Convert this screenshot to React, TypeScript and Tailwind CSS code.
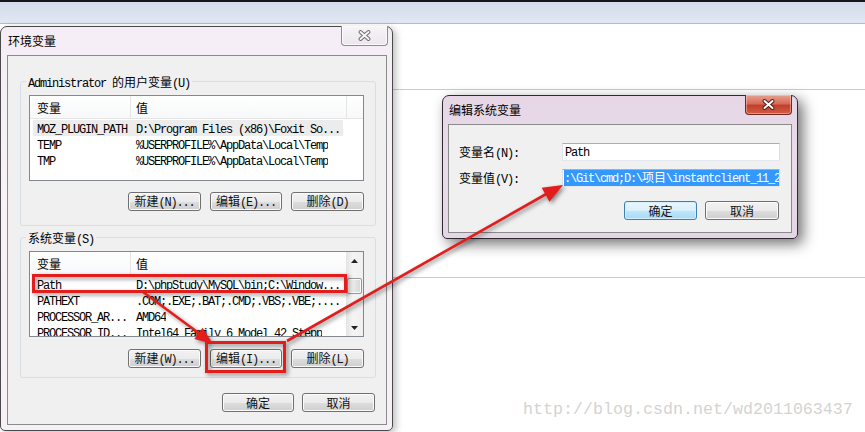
import React from "react";

const CJK_RE = /[\u2e80-\u9fff\uf900-\ufaff\uff00-\uffef\u3000-\u303f]/;

function T({ s }: { s: string }) {
  const parts: { t: string; c: boolean }[] = [];
  for (const ch of s) {
    const c = CJK_RE.test(ch);
    const last = parts[parts.length - 1];
    if (last && last.c === c) last.t += ch;
    else parts.push({ t: ch, c });
  }
  return (
    <span className="whitespace-pre">
      {parts.map((p, i) =>
        p.c ? (
          <span key={i} className="font-['Noto_Sans_CJK_SC',sans-serif] text-[12px]">
            {p.t}
          </span>
        ) : (
          <span key={i} className="font-['Liberation_Mono',monospace] text-[12px] tracking-[-1.2px]">
            {p.t}
          </span>
        )
      )}
    </span>
  );
}

function Btn({ s, w, def = false }: { s: string; w: string; def?: boolean }) {
  return (
    <div
      className={`${w} flex h-[19px] items-center justify-center rounded-[3px] border leading-[15px] text-[#111] ${
        def
          ? "border-[#3c7fb1] bg-[linear-gradient(to_bottom,#eaf6fd_0%,#d9f0fc_50%,#bee6fd_51%,#a7d9f5_100%)] shadow-[inset_0_0_0_1px_#d3eefc]"
          : "border-[#707070] bg-[linear-gradient(to_bottom,#f2f2f2_0%,#ebebeb_50%,#dddddd_51%,#cfcfcf_100%)] shadow-[inset_0_0_0_1px_#fbfbfb]"
      }`}
    >
      <T s={s} />
    </div>
  );
}

function CloseX({ outline, fill }: { outline: string; fill: string }) {
  return (
    <svg width="13" height="11" viewBox="0 0 13 11">
      <path d="M2.5 2 L10.5 9 M10.5 2 L2.5 9" stroke={outline} strokeWidth="3.8" strokeLinecap="round" />
      <path d="M2.5 2 L10.5 9 M10.5 2 L2.5 9" stroke={fill} strokeWidth="2" strokeLinecap="round" />
    </svg>
  );
}

function Scrollbar() {
  return (
    <div className="flex w-[17px] shrink-0 flex-col bg-[linear-gradient(to_right,#e3e3e3,#f4f4f4_40%,#f0f0f0)]">
      <div className="flex h-[17px] items-center justify-center">
        <svg width="7" height="4" viewBox="0 0 7 4">
          <path d="M0 4 L3.5 0 L7 4Z" fill="#222" />
        </svg>
      </div>
      <div className="flex-1">
        <div className="mx-[1px] mt-[9px] h-[16px] rounded-[2px] border border-[#979797] bg-[linear-gradient(to_right,#f4f4f4,#e6e6e6_50%,#d6d6d6)] shadow-[inset_0_0_0_1px_#fafafa]" />
      </div>
      <div className="flex h-[17px] items-center justify-center">
        <svg width="7" height="4" viewBox="0 0 7 4">
          <path d="M0 0 L3.5 4 L7 0Z" fill="#222" />
        </svg>
      </div>
    </div>
  );
}

function ListView({
  rows,
  scroll,
  selected,
}: {
  rows: [string, string][];
  scroll: boolean;
  selected: number;
}) {
  return (
    <div className="flex h-[86px] w-full overflow-hidden border border-[#828790] bg-white text-black">
      <div className="flex min-w-0 flex-1 flex-col">
        <div className="flex h-[23px] shrink-0 border-b border-[#e5e5e5] bg-[linear-gradient(to_bottom,#ffffff,#f7f8fa)] leading-[16px]">
          <div className="flex w-[101px] items-center border-r border-[#e5e5e5] pl-[7px]">
            <T s="变量" />
          </div>
          <div className="flex flex-1 items-center pl-[5px]">
            <T s="值" />
          </div>
        </div>
        <div className="px-[3px] pt-[1px]">
          {rows.map((r, i) => (
            <div
              key={i}
              className={`flex h-[16px] items-center overflow-hidden whitespace-nowrap leading-[16px] ${
                i === selected ? "bg-[#ececec]" : ""
              }`}
            >
              <div className="w-[97px] shrink-0 overflow-hidden pl-[4px]">
                <T s={r[0]} />
              </div>
              <div className="overflow-hidden pl-[6px]">
                <T s={r[1]} />
              </div>
            </div>
          ))}
        </div>
      </div>
      {scroll ? (
        <Scrollbar />
      ) : (
        <div className="h-[23px] w-[17px] shrink-0 border-b border-l border-[#e5e5e5] bg-[linear-gradient(to_bottom,#ffffff,#f7f8fa)]" />
      )}
    </div>
  );
}

const userRows: [string, string][] = [
  ["MOZ_PLUGIN_PATH", "D:\\Program Files (x86)\\Foxit So..."],
  ["TEMP", "%USERPROFILE%\\AppData\\Local\\Temp"],
  ["TMP", "%USERPROFILE%\\AppData\\Local\\Temp"],
];

const sysRows: [string, string][] = [
  ["Path", "D:\\phpStudy\\MySQL\\bin;C:\\Window..."],
  ["PATHEXT", ".COM;.EXE;.BAT;.CMD;.VBS;.VBE;...."],
  ["PROCESSOR_AR...", "AMD64"],
  ["PROCESSOR_ID...", "Intel64 Family 6 Model 42 Stepp"],
];

function EnvDialog() {
  return (
    <div className="absolute left-0 top-[26px] flex h-[405px] w-[393px] flex-col rounded-t-[7px] rounded-b-[5px] border border-[#4a4a4a] bg-[linear-gradient(to_bottom,#f4edf5,#f8f2f8_40%,#f7f1f7)] shadow-[3px_2px_7px_rgba(0,0,0,0.25)]">
      <div className="flex h-[28px] shrink-0 items-start">
        <div className="flex h-[28px] flex-1 items-center pl-[7px] leading-[16px] text-black">
          <span className="font-['Noto_Sans_CJK_SC',sans-serif] text-[12px]">环境变量</span>
        </div>
        <div className="mr-[4px] -mt-[1px] flex h-[20px] w-[47px] items-center justify-center rounded-b-[4px] border border-t-0 border-[#8d8d8d] bg-[linear-gradient(to_bottom,#f7f5f8,#ebe6ec)] shadow-[inset_0_0_0_1px_#fbfbfb]">
          <CloseX outline="#6a6a6a" fill="#f5f5f5" />
        </div>
      </div>
      <div className="mx-[5px] ml-[6px] flex h-[370px] flex-col border border-[#8b8b8b] bg-[#f0f0f0] text-black">
        <fieldset className="ml-[12px] mr-[10px] mt-[17px] rounded-[3px] border border-[#d5dfe5] pb-[14px] pl-[8px] pr-[11px] pt-[6px]">
          <legend className="ml-[-3px] h-[16px] whitespace-nowrap px-[2px] leading-[16px]">
            <T s="Administrator 的用户变量(U)" />
          </legend>
          <ListView rows={userRows} scroll={false} selected={0} />
          <div className="mt-[11px] flex justify-end gap-[9px]">
            <Btn s="新建(N)..." w="w-[73px]" />
            <Btn s="编辑(E)..." w="w-[72px]" />
            <Btn s="删除(D)" w="w-[73px]" />
          </div>
        </fieldset>
        <fieldset className="ml-[12px] mr-[10px] mt-[3px] rounded-[3px] border border-[#d5dfe5] pb-[9px] pl-[8px] pr-[11px] pt-[6px]">
          <legend className="ml-[-3px] h-[16px] whitespace-nowrap px-[2px] leading-[16px]">
            <T s="系统变量(S)" />
          </legend>
          <ListView rows={sysRows} scroll={true} selected={-1} />
          <div className="mt-[12px] flex justify-end gap-[9px]">
            <Btn s="新建(W)..." w="w-[73px]" />
            <Btn s="编辑(I)..." w="w-[72px]" />
            <Btn s="删除(L)" w="w-[73px]" />
          </div>
        </fieldset>
        <div className="mr-[11px] mt-[15px] flex justify-end gap-[8px]">
          <Btn s="确定" w="w-[72px]" />
          <Btn s="取消" w="w-[73px]" />
        </div>
      </div>
    </div>
  );
}

function EditDialog() {
  return (
    <div className="absolute left-[442px] top-[95px] flex h-[144px] w-[356px] flex-col rounded-t-[7px] rounded-b-[5px] border border-[#2e2a2e] bg-[linear-gradient(to_bottom,#e6d6e6,#e9dce9_50%,#e4d6e4)] shadow-[5px_5px_14px_rgba(0,0,0,0.55)]">
      <div className="flex h-[28px] shrink-0 items-start">
        <div className="flex h-[28px] flex-1 items-center pl-[6px] leading-[16px] text-black">
          <span className="font-['Noto_Sans_CJK_SC',sans-serif] text-[12px]">编辑系统变量</span>
        </div>
        <div className="mr-[5px] -mt-[1px] flex h-[20px] w-[47px] items-center justify-center rounded-b-[4px] border border-t-0 border-[#6d2a22] bg-[linear-gradient(to_bottom,#e7a292,#d66c59_45%,#c1402c_55%,#d25c44)] shadow-[inset_0_0_0_1px_rgba(255,220,210,0.45)]">
          <CloseX outline="#4b1a14" fill="#ffffff" />
        </div>
      </div>
      <div className="ml-[5px] mr-[5px] flex h-[109px] flex-col border border-[#8b8b8b] bg-[#f0f0f0] pl-[10px] text-black">
        <div className="mt-[18px] flex h-[18px] items-center">
          <div className="w-[103px] leading-[16px]">
            <T s="变量名(N):" />
          </div>
          <div className="flex h-[18px] w-[218px] items-center border border-[#abadb3] border-b-[#e3e9ef] border-l-[#e2e3ea] border-r-[#dbdfe6] bg-white pl-[2px] leading-[15px]">
            <T s="Path" />
          </div>
        </div>
        <div className="mt-[8px] flex h-[18px] items-center">
          <div className="w-[103px] leading-[16px]">
            <T s="变量值(V):" />
          </div>
          <div className="flex h-[18px] w-[218px] items-center overflow-hidden whitespace-nowrap border border-[#abadb3] border-b-[#e3e9ef] border-l-[#e2e3ea] border-r-[#dbdfe6] bg-white pl-[1px]">
            <span className="bg-[#3399ff] leading-[15px] text-white">
              <T s={":\\Git\\cmd;D:\\项目\\instantclient_11_2"} />
            </span>
          </div>
        </div>
        <div className="mr-[12px] mt-[14px] flex justify-end gap-[8px]">
          <Btn s="确定" w="w-[73px]" def />
          <Btn s="取消" w="w-[74px]" />
        </div>
      </div>
    </div>
  );
}

function Annotations() {
  return (
    <svg
      className="pointer-events-none absolute left-0 top-0 drop-shadow-[2px_2px_2px_rgba(0,0,0,0.45)]"
      width="865"
      height="432"
      viewBox="0 0 865 432"
    >
      <rect x="33.5" y="275.5" width="312" height="16" fill="none" stroke="#e31c1c" strokeWidth="3" />
      <rect x="206.5" y="342.5" width="78" height="29" fill="none" stroke="#e31c1c" strokeWidth="3" />
      <line x1="143" y1="292" x2="200" y2="334" stroke="#e31c1c" strokeWidth="2.6" />
      <polygon points="213,344 194.4,339 202.6,327.8" fill="#e31c1c" />
      <line x1="287" y1="341" x2="548" y2="193" stroke="#e31c1c" strokeWidth="2.6" />
      <polygon points="563,185 549.5,201.8 541.7,187.8" fill="#e31c1c" />
    </svg>
  );
}

export default function App() {
  return (
    <div className="relative h-[432px] w-[865px] overflow-hidden bg-white">
      <div className="h-[2px] bg-[#171717]" />
      <div className="h-[22px] border-b border-[#b3bccb] bg-[linear-gradient(to_bottom,#d3dbeb,#e2e8f2)]" />
      <div className="ml-[393px] h-[66px] border-b border-[#cbcbcb]" />
      <div className="ml-[393px] h-[188px] border-b border-[#cbcbcb]" />
      <EnvDialog />
      <EditDialog />
      <Annotations />
      <div className="absolute left-[523px] top-[400px] whitespace-pre font-['Liberation_Mono',monospace] text-[16.67px] leading-[20px] text-[#d3d3d3]">
        http://blog.csdn.net/wd2011063437
      </div>
    </div>
  );
}
